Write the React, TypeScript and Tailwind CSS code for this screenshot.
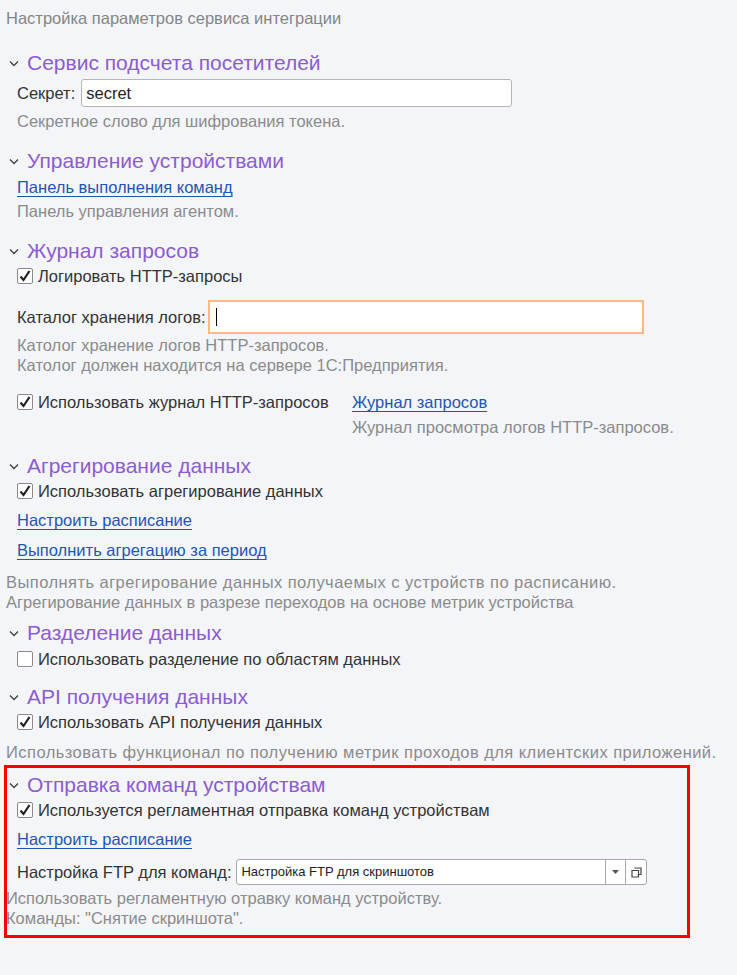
import React from 'react'

const Chevron = () => (
  <svg width="10" height="7" viewBox="0 0 10 7" className="shrink-0">
    <path d="M1 1.5 L5 5.5 L9 1.5" fill="none" stroke="#444" strokeWidth="1.4" />
  </svg>
)

const Check = ({ checked }: { checked: boolean }) => (
  <span className="w-[16px] h-[16px] border border-[#8a8a8a] bg-white rounded-[2px] flex items-center justify-center shrink-0">
    {checked && (
      <svg width="14" height="14" viewBox="0 0 14 14">
        <path d="M2.5 7.5 L5.5 11 L11.5 2" fill="none" stroke="#222" strokeWidth="2.2" />
      </svg>
    )}
  </span>
)

const Section = ({ title, children }: { title: string; children: React.ReactNode }) => (
  <div>
    <div className="flex items-center gap-[8px] pl-[3px] h-[26px]">
      <Chevron />
      <span className="text-[21px] text-[#8b5cd4] leading-[26px]">{title}</span>
    </div>
    {children}
  </div>
)

const CheckRow = ({ checked, label }: { checked: boolean; label: string }) => (
  <div className="flex items-center gap-[5px] pl-[11px] h-[24px] text-[16.5px] text-[#333]">
    <Check checked={checked} />
    <span>{label}</span>
  </div>
)

const Link = ({ children }: { children: React.ReactNode }) => (
  <span className="text-[16.5px] text-[#1d56b6] underline underline-offset-[3px]">{children}</span>
)

const Hint = ({ children, wide }: { children: React.ReactNode; wide?: boolean }) => (
  <div className={wide ? 'text-[16.5px] text-[#8b8b8b] leading-[20px] h-[20px] whitespace-nowrap tracking-[0.45px]' : 'text-[16.5px] text-[#8b8b8b] leading-[20px] h-[20px] whitespace-nowrap'}>
    {children}
  </div>
)

export default function App() {
  return (
    <div className="min-h-[975px] w-[737px] bg-[#f4f5f9] pl-[6px] pt-[8px] text-[#333]" style={{ fontFamily: '"Liberation Sans", Arial, sans-serif' }}>
      <div className="text-[16.5px] text-[#858585] h-[20px] leading-[20px]">Настройка параметров сервиса интеграции</div>

      <div className="mt-[22px]">
        <Section title="Сервис подсчета посетителей">
          <div className="flex items-center gap-[6px] pl-[11px] mt-[3px]">
            <span className="text-[16.5px]">Секрет:</span>
            <div className="w-[431px] h-[28px] bg-white border border-[#b5b5b5] rounded-[3px] flex items-center px-[4px] text-[16.5px] text-[#222]">secret</div>
          </div>
          <div className="pl-[11px] mt-[4px]"><Hint>Секретное слово для шифрования токена.</Hint></div>
        </Section>
      </div>

      <div className="mt-[17px]">
        <Section title="Управление устройствами">
          <div className="pl-[11px] mt-[1px] h-[24px] leading-[24px]"><Link>Панель выполнения команд</Link></div>
          <div className="pl-[11px] mt-[2px]"><Hint>Панель управления агентом.</Hint></div>
        </Section>
      </div>

      <div className="mt-[17px]">
        <Section title="Журнал запросов">
          <CheckRow checked label="Логировать HTTP-запросы" />
          <div className="flex items-center gap-[3px] pl-[11px] mt-[12px]">
            <span className="text-[16.5px]">Каталог хранения логов:</span>
            <div className="w-[436px] h-[34px] bg-white border-2 border-[#fcbb7c] flex items-center px-[6px]">
              <span className="w-[1px] h-[18px] bg-black" />
            </div>
          </div>
          <div className="pl-[11px] mt-[1px]">
            <Hint>Католог хранение логов HTTP-запросов.</Hint>
            <Hint>Католог должен находится на сервере 1С:Предприятия.</Hint>
          </div>
          <div className="flex items-start mt-[15px]">
            <div className="w-[346px]">
              <CheckRow checked label="Использовать журнал HTTP-запросов" />
            </div>
            <div>
              <div className="h-[24px] leading-[24px]"><Link>Журнал запросов</Link></div>
              <div className="mt-[3px]"><Hint>Журнал просмотра логов HTTP-запросов.</Hint></div>
            </div>
          </div>
        </Section>
      </div>

      <div className="mt-[16px]">
        <Section title="Агрегирование данных">
          <CheckRow checked label="Использовать агрегирование данных" />
          <div className="pl-[11px] mt-[5px] h-[24px] leading-[24px]"><Link>Настроить расписание</Link></div>
          <div className="pl-[11px] mt-[6px] h-[24px] leading-[24px]"><Link>Выполнить агрегацию за период</Link></div>
          <div className="mt-[10px]">
            <Hint wide>Выполнять агрегирование данных получаемых с устройств по расписанию.</Hint>
            <Hint>Агрегирование данных в разрезе переходов на основе метрик устройства</Hint>
          </div>
        </Section>
      </div>

      <div className="mt-[8px]">
        <Section title="Разделение данных">
          <div className="mt-[1px]">
            <CheckRow checked={false} label="Использовать разделение по областям данных" />
          </div>
        </Section>
      </div>

      <div className="mt-[13px]">
        <Section title="API получения данных">
          <CheckRow checked label="Использовать API получения данных" />
          <div className="mt-[8px]"><Hint wide>Использовать функционал по получению метрик проходов для клиентских приложений.</Hint></div>
        </Section>
      </div>

      <div className="mt-[3px] -ml-[2px] w-[686px] border-[3px] border-[#ff0000] pt-[4px] pb-[7px]">
        <div className="-ml-[1px]">
          <Section title="Отправка команд устройствам">
            <CheckRow checked label="Используется регламентная отправка команд устройствам" />
            <div className="pl-[11px] mt-[5px] h-[24px] leading-[24px]"><Link>Настроить расписание</Link></div>
            <div className="flex items-center gap-[5px] pl-[11px] mt-[8px]">
              <span className="text-[16.5px]">Настройка FTP для команд:</span>
              <div className="w-[411px] h-[26px] bg-white border border-[#a8a8a8] rounded-[3px] flex items-stretch">
                <div className="flex-1 flex items-center px-[4px] text-[13px] text-[#222]">Настройка FTP для скриншотов</div>
                <div className="w-[20px] border-l border-[#a8a8a8] flex items-center justify-center">
                  <svg width="7" height="4" viewBox="0 0 7 4"><path d="M0 0 H7 L3.5 4 Z" fill="#555" /></svg>
                </div>
                <div className="w-[21px] border-l border-[#a8a8a8] flex items-center justify-center">
                  <svg width="11" height="11" viewBox="0 0 11 11">
                    <path d="M3.5 1 H10 V7.5 H7.5" fill="none" stroke="#444" strokeWidth="1.2" />
                    <path d="M1 3.5 H7.5 V10 H1 Z" fill="none" stroke="#444" strokeWidth="1.2" />
                  </svg>
                </div>
              </div>
            </div>
            <div className="mt-[3px]">
              <Hint>Использовать регламентную отравку команд устройству.</Hint>
              <Hint>Команды: "Снятие скриншота".</Hint>
            </div>
          </Section>
        </div>
      </div>
    </div>
  )
}
